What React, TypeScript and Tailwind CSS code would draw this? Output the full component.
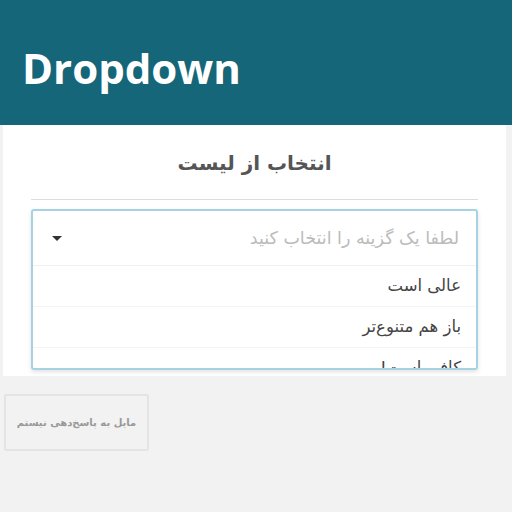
export default function App() {
  const fa = { fontFamily: '"DejaVu Sans", "Noto Sans", sans-serif' };
  return (
    <div className="w-[512px] h-[512px] bg-[#f2f2f2] overflow-hidden flex flex-col">
      <div className="h-[125px] bg-[#166679] flex items-center px-[22px] pt-[10px]">
        <span className="text-white font-bold text-[42px]" style={{ fontFamily: '"Open Sans", sans-serif' }}>
          Dropdown
        </span>
      </div>
      <div className="ml-[3px] mr-[6px] h-[251px] bg-white px-[28px] pt-[22px] flex flex-col" dir="rtl" style={fa}>
        <div className="text-center text-[20px] font-bold text-[#555] leading-[32px]">انتخاب از لیست</div>
        <div className="mt-[20px] h-px bg-[#ddd]" />
        <div className="mt-[9px] h-[161px] border-2 border-[#a6d2e2] rounded-[3px] shadow-[0_2px_4px_rgba(0,0,0,0.12)] overflow-hidden flex flex-col">
          <div className="h-[55px] shrink-0 flex items-center justify-between pr-[17px] pl-[19px] border-b border-[#f0f0f0]">
            <span className="text-[17.5px] text-[#bbb]">لطفا یک گزینه را انتخاب کنید</span>
            <span className="w-0 h-0 border-l-[5px] border-r-[5px] border-t-[5px] border-l-transparent border-r-transparent border-t-[#333]" />
          </div>
          {["عالی است", "باز هم متنوع‌تر", "کافی است!"].map((t) => (
            <div key={t} className="h-[41px] shrink-0 flex items-center pr-[15px] border-b border-[#f4f4f4] text-[16.5px] text-[#444]">
              {t}
            </div>
          ))}
        </div>
      </div>
      <div className="mt-[18px] ml-[4px] w-[145px] h-[57px] border-2 border-[#e4e4e4] rounded-[2px] flex items-center justify-center text-[10px] font-bold text-[#999]" dir="rtl" style={fa}>
        مایل به پاسخ‌دهی نیستم
      </div>
    </div>
  );
}
